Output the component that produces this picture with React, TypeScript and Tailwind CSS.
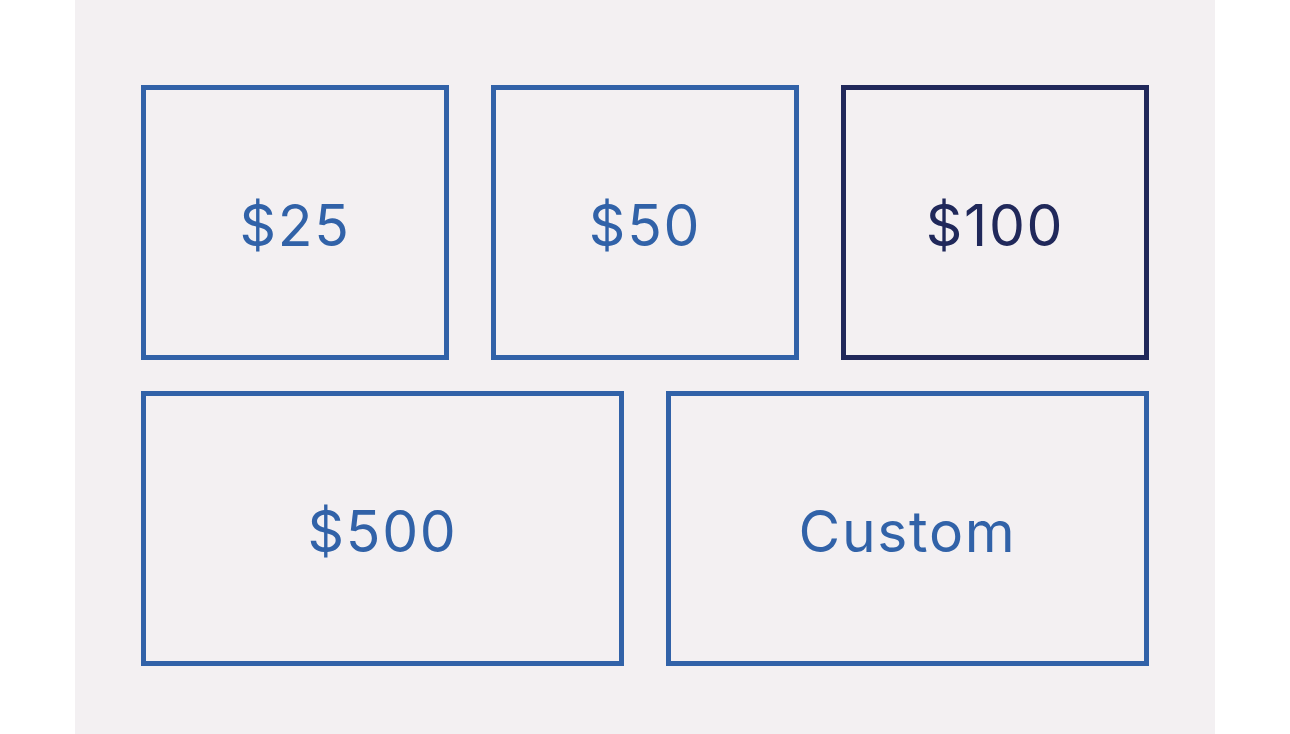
import React from "react";

const Box = ({ label, active = false }: { label: string; active?: boolean }) => (
  <div
    className={`flex h-[275px] items-center justify-center border-[5px] pt-[6px] ${
      active ? "border-[#20285a] text-[#20285a]" : "border-[#3162a8] text-[#3162a8]"
    }`}
  >
    <span className="text-[57px] font-normal leading-none tracking-[0.03em]">{label}</span>
  </div>
);

export default function App() {
  return (
    <div className="min-h-[734px] bg-white" style={{ fontFamily: "Inter, 'Noto Sans', sans-serif" }}>
      <div className="ml-[75px] w-[1140px] bg-[#f3f0f2] px-[66px] pt-[85px] pb-[68px]">
        <div className="grid grid-cols-3 gap-x-[42px]">
          <Box label="$25" />
          <Box label="$50" />
          <Box label="$100" active />
        </div>
        <div className="mt-[31px] grid grid-cols-2 gap-x-[42px]">
          <Box label="$500" />
          <Box label="Custom" />
        </div>
      </div>
    </div>
  );
}
